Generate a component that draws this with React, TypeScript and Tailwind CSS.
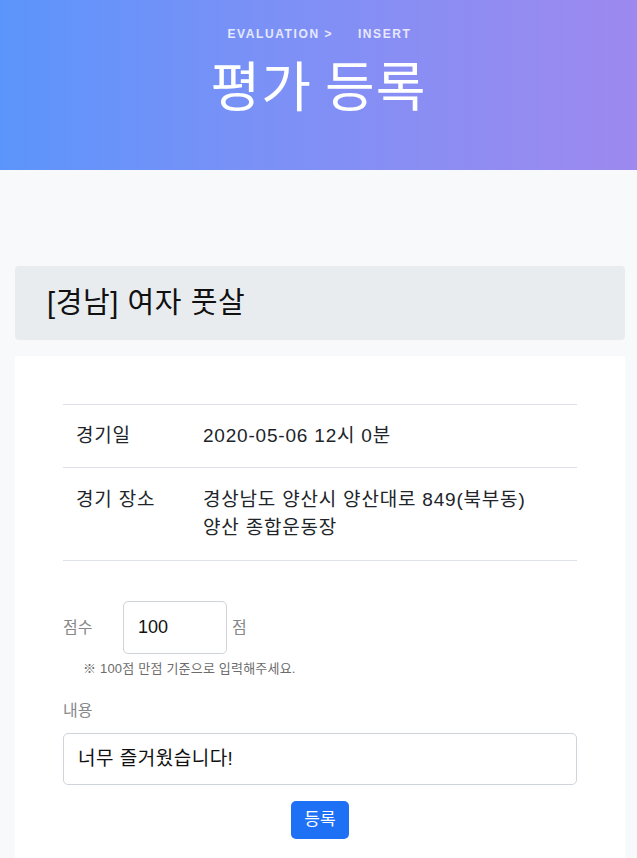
export default function App() {
  const font = { fontFamily: '"Liberation Sans", "Noto Sans CJK KR", sans-serif' };
  return (
    <div className="min-h-[858px] bg-[#f8f9fa]" style={font}>
      <div className="h-[170px] bg-gradient-to-r from-[#5b95fb] to-[#9d89ef] flex flex-col items-center pt-[26px]">
        <div className="text-[12px] font-bold tracking-[1.6px] text-white/80 leading-[16px] ml-[2px]">
          EVALUATION &gt;&nbsp;&nbsp;&nbsp;&nbsp; INSERT
        </div>
        <div className="text-[54px] text-white leading-[60px] mt-[12px] tracking-[1px]" style={{ fontFamily: '"Noto Sans CJK KR", sans-serif', fontWeight: 400 }}>
          평가 등록
        </div>
      </div>
      <div className="pt-[96px] pl-[15px] pr-[12px]">
        <div className="h-[74px] bg-[#e9ecef] rounded-[4px] flex items-center px-[32px]">
          <span className="text-[29px] text-[#111] leading-[32px] tracking-[0.6px]">[경남] 여자 풋살</span>
        </div>
        <div className="mt-[16px] bg-white pt-[48px] px-[48px] pb-[19px]">
          <div className="border-t border-[#dee2e6] text-[19px] text-[#212529] tracking-[0.8px]">
            <div className="flex border-b border-[#dee2e6] py-[17px] leading-[28px]">
              <div className="w-[140px] pl-[13px]">경기일</div>
              <div>2020-05-06 12시 0분</div>
            </div>
            <div className="flex border-b border-[#dee2e6] py-[18px] leading-[28px]">
              <div className="w-[140px] pl-[13px]">경기 장소</div>
              <div>경상남도 양산시 양산대로 849(북부동)<br />양산 종합운동장</div>
            </div>
          </div>
          <div className="mt-[40px] flex items-center">
            <span className="text-[16px] text-[#888] w-[60px]">점수</span>
            <div className="w-[104px] h-[53px] border border-[#ced4da] rounded-[5px] flex items-center pl-[14px] text-[18px] text-[#111]">100</div>
            <span className="text-[16px] text-[#888] ml-[5px]">점</span>
          </div>
          <div className="mt-[7px] ml-[20px] text-[13px] text-[#6c6c6c] leading-[16px] tracking-[0.2px]">※ 100점 만점 기준으로 입력해주세요.</div>
          <div className="mt-[25px] text-[16px] text-[#888] leading-[18px]">내용</div>
          <div className="mt-[13px] h-[52px] border border-[#ced4da] rounded-[5px] flex items-center pl-[14px] text-[19px] text-[#111] tracking-[0.5px]">너무 즐거웠습니다!</div>
          <div className="flex justify-center mt-[16px]">
            <div className="w-[58px] h-[38px] rounded-[5px] bg-[#1e70f5] text-white text-[17px] flex items-center justify-center">등록</div>
          </div>
        </div>
      </div>
    </div>
  );
}
